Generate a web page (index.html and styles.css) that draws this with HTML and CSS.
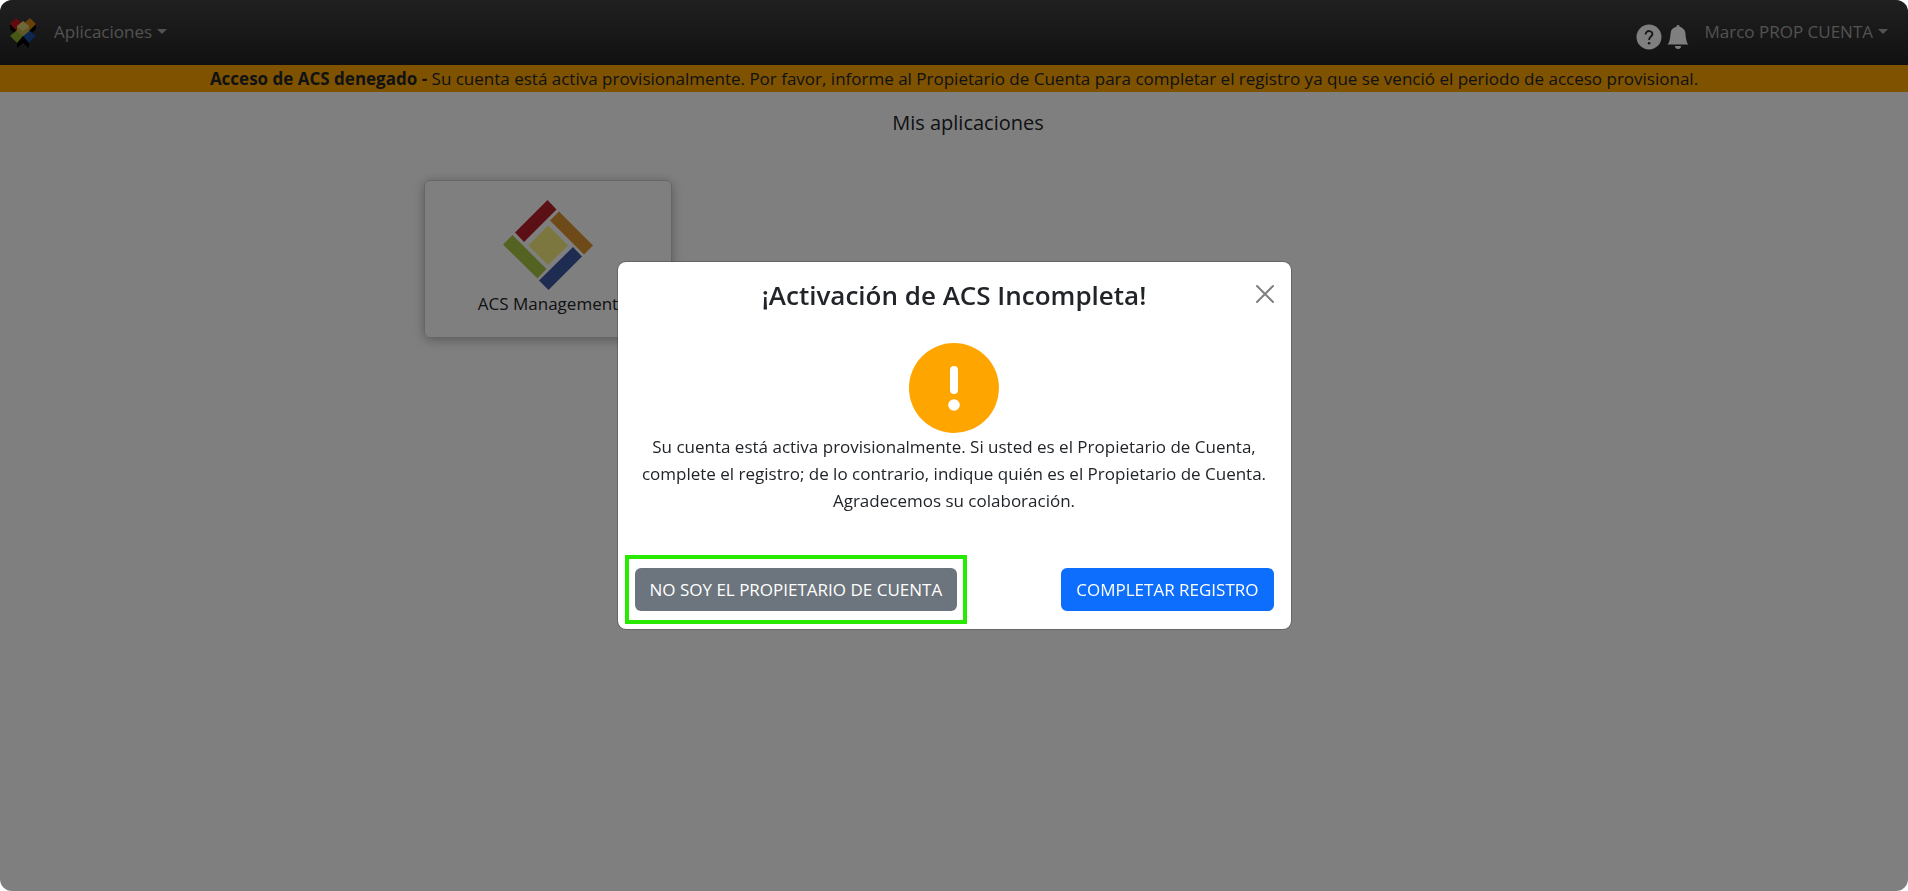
FILE: index.html
```
<!DOCTYPE html>
<html lang="es">
<head>
    <meta charset="UTF-8">
    <meta name="viewport" content="width=device-width, initial-scale=1">
    <title>Mis aplicaciones</title>
    <link rel="stylesheet" href="styles.css">
</head>
<body>
    <nav class="navbar">
        <a class="brand" href="#" aria-label="Inicio">
            <svg width="26" height="30" viewBox="0 0 26 30">
                <path fill="#000" d="M0 6v5l6 6 1-5zM26 6v5l-6 6-1-5z"/>
                <path fill="#000" d="M0 18l7 7v5l6-5V15zM26 18l-7 7v5l-6-5V15z"/>
                <path fill="#c4161c" d="M6 0l7 6-6 7-7-7z"/>
                <path fill="#d08014" d="M20 0l6 6-7 7-6-7z"/>
                <path fill="#8fae2a" d="M7 12l6 6-6 7-7-7z"/>
                <path fill="#1f4f9e" d="M19 12l7 6-7 7-6-7z"/>
                <path fill="#dcd070" d="M13 3l6 5v5l-6 5-6-5V8z"/>
                <path fill="#c2b04c" d="M7 9l6 4 6-4v4l-6 5-6-5z"/>
            </svg>
        </a>
        <button class="nav-menu">Aplicaciones</button>
        <div class="nav-right">
            <button class="icon-btn" aria-label="Ayuda">
                <svg width="26" height="26" viewBox="0 0 26 26">
                    <circle cx="13" cy="13" r="12.5" fill="#fff"/>
                    <path d="M9.6 10.4C9.6 5.8 16.6 6.2 16.4 10.2C16.2 12.7 13.1 12.6 13.1 16" fill="none" stroke="#2c2c2c" stroke-width="1.9"/>
                    <circle cx="13.1" cy="19.2" r="1.3" fill="#2c2c2c"/>
                </svg>
            </button>
            <button class="icon-btn" aria-label="Notificaciones">
                <svg width="24" height="24" viewBox="0 0 16 16" fill="#fff">
                    <path d="M8 16a2 2 0 0 0 2-2H6a2 2 0 0 0 2 2zm.995-14.901a1 1 0 1 0-1.99 0A5.002 5.002 0 0 0 3 6c0 1.098-.5 6-2 7h14c-1.5-1-2-5.902-2-7 0-2.42-1.72-4.44-4.005-4.901z"/>
                </svg>
            </button>
            <button class="nav-menu">Marco PROP CUENTA</button>
        </div>
    </nav>

    <div class="alert-bar">
        <strong>Acceso de ACS denegado -</strong> Su cuenta está activa provisionalmente. Por favor, informe al Propietario de Cuenta para completar el registro ya que se venció el periodo de acceso provisional.
    </div>

    <main class="main">
        <h1>Mis aplicaciones</h1>
        <div class="apps">
            <a class="app-card" href="#">
                <svg width="90" height="90" viewBox="0 0 90 90">
                    <path fill="#b7202a" d="M44.5 0L53.500 9.500 21 42 12 32.500z"/>
                    <path fill="#dd9430" d="M56 11.500L90 45.500 81 54.500 47 20.500z"/>
                    <path fill="#a9c742" d="M9.500 35L43.500 69 34.500 78.500 0 44.500z"/>
                    <path fill="#3c59a4" d="M70 47L79 56.500 45.500 90 36 80.500z"/>
                    <path fill="#f8ee7c" d="M45 25.500L65 45.500 45 65 25.500 45.500z"/>
                </svg>
                <span>ACS Management</span>
            </a>
        </div>
    </main>

    <!-- Modal -->
    <div class="backdrop">
        <div class="modal" role="dialog" aria-modal="true" aria-labelledby="modalTitle">
            <div class="modal-header">
                <h2 id="modalTitle">¡Activación de ACS Incompleta!</h2>
                <button class="btn-close" aria-label="Cerrar">
                    <svg width="18" height="18" viewBox="0 0 18 18">
                        <path d="M1 1l16 16M17 1L1 17" stroke="#808080" stroke-width="2" stroke-linecap="round"/>
                    </svg>
                </button>
            </div>
            <div class="modal-body">
                <svg width="90" height="90" viewBox="0 0 90 90">
                    <circle cx="45" cy="45" r="45" fill="#ffa500"/>
                    <rect x="41" y="23" width="8" height="28" rx="4" fill="#fff"/>
                    <circle cx="45" cy="62" r="5.800" fill="#fff"/>
                </svg>
                <p>Su cuenta está activa provisionalmente. Si usted es el Propietario de Cuenta, complete el registro; de lo contrario, indique quién es el Propietario de Cuenta. Agradecemos su colaboración.</p>
            </div>
            <div class="modal-footer">
                <button class="btn btn-secondary">NO SOY EL PROPIETARIO DE CUENTA</button>
                <button class="btn btn-primary">COMPLETAR REGISTRO</button>
            </div>
        </div>
    </div>
</body>
</html>
```
FILE: styles.css
```
* {
    box-sizing: border-box;
}
body {
    margin: 0;
    font-family: "Segoe UI", "Open Sans", "Noto Sans", sans-serif;
    font-size: 17px;
    line-height: 27px;
    color: #212529;
    background: #fff;
}
button {
    font: inherit;
    border: none;
    cursor: pointer;
}
svg {
    display: block;
}
.navbar {
    display: flex;
    align-items: center;
    height: 65px;
    padding: 0 20px 2px 10px;
    background: linear-gradient(#404040, #222);
    border-radius: 12px 12px 0 0;
}
.nav-menu {
    display: flex;
    align-items: center;
    gap: 5px;
    padding: 0;
    background: none;
    color: #a4a4a4;
}
.brand {
    padding-top: 2px;
}
.brand + .nav-menu {
    margin-left: 18px;
}
.nav-menu::after {
    content: "";
    border-top: 5px solid;
    border-left: 5px solid transparent;
    border-right: 5px solid transparent;
}
.nav-right {
    display: flex;
    align-items: center;
    margin-left: auto;
}
.icon-btn {
    padding: 10px 2px 0;
    background: none;
}
.icon-btn + .nav-menu {
    margin-left: 12px;
}
.alert-bar {
    background: #ffa500;
    text-align: center;
}
.main {
    min-height: 400px;
    padding: 17px 0 0 28px;
}
.main h1 {
    margin: 0;
    font-size: 20px;
    font-weight: 500;
    line-height: 28px;
    text-align: center;
}
.apps {
    display: grid;
    grid-template-columns: repeat(auto-fill, 248px);
    gap: 32px;
    max-width: 1088px;
    margin: 43px auto 0;
}
.app-card {
    display: flex;
    flex-direction: column;
    align-items: center;
    padding: 19px 16px 20px;
    border: 1px solid #ccc;
    border-radius: 6px;
    box-shadow: 0 2px 12px rgba(0, 0, 0, 0.3);
    color: #212529;
    text-decoration: none;
}
.backdrop {
    position: fixed;
    inset: 0;
    display: flex;
    align-items: center;
    justify-content: center;
    background: rgba(0, 0, 0, 0.5);
    border-radius: 12px;
}
.modal {
    width: 90%;
    max-width: 675px;
    background: #fff;
    background-clip: padding-box;
    border: 1px solid rgba(0, 0, 0, 0.2);
    border-radius: 9px;
}
.modal-header {
    position: relative;
    padding: 17px 18px;
    text-align: center;
}
.modal-header h2 {
    margin: 0;
    font-size: 26px;
    font-weight: 600;
    line-height: 32px;
}
.btn-close {
    position: absolute;
    top: 14px;
    right: 8px;
    padding: 9px;
    background: none;
}
.modal-body {
    padding: 15px 18px 18px;
    text-align: center;
}
.modal-body svg {
    margin: 0 auto;
}
.modal-body p {
    margin: 0 0 18px;
}
.modal-footer {
    display: flex;
    justify-content: space-between;
    padding: 18px 17px;
}
.btn {
    padding: 8px 15px;
    border-radius: 6px;
    color: #fff;
}
.btn-primary {
    background: #0d6efd;
}
.btn-secondary {
    position: relative;
    background: #6c757d;
}
/* marco verde alrededor del botón */
.btn-secondary::after {
    content: "";
    position: absolute;
    inset: -13px -10px;
    border: 4px solid #28ea00;
}
```
